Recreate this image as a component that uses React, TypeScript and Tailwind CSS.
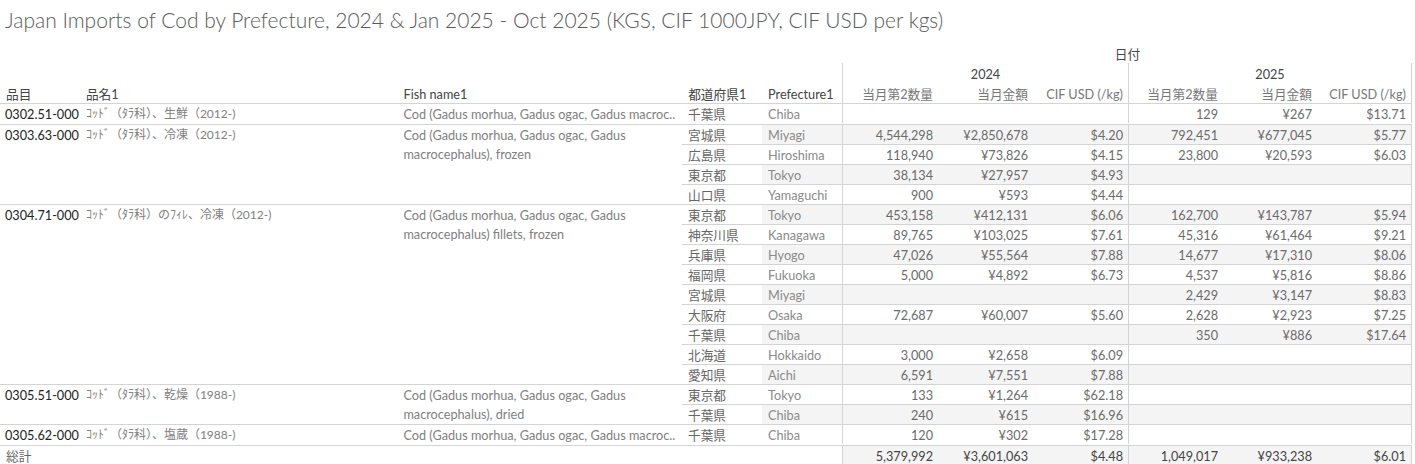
import React from "react";

type Row = { jp: string; en: string; v: string[] };
type Group = { code: string; name: string; fish: string[]; rows: Row[] };

const E = ["", "", ""];

const groups: Group[] = [
  {
    code: "0302.51-000",
    name: "ｺｯﾄﾞ（ﾀﾗ科）、生鮮（2012-)",
    fish: ["Cod (Gadus morhua, Gadus ogac, Gadus macroc.."],
    rows: [{ jp: "千葉県", en: "Chiba", v: [...E, "129", "¥267", "$13.71"] }],
  },
  {
    code: "0303.63-000",
    name: "ｺｯﾄﾞ（ﾀﾗ科）、冷凍（2012-)",
    fish: ["Cod (Gadus morhua, Gadus ogac, Gadus", "macrocephalus), frozen"],
    rows: [
      { jp: "宮城県", en: "Miyagi", v: ["4,544,298", "¥2,850,678", "$4.20", "792,451", "¥677,045", "$5.77"] },
      { jp: "広島県", en: "Hiroshima", v: ["118,940", "¥73,826", "$4.15", "23,800", "¥20,593", "$6.03"] },
      { jp: "東京都", en: "Tokyo", v: ["38,134", "¥27,957", "$4.93", ...E] },
      { jp: "山口県", en: "Yamaguchi", v: ["900", "¥593", "$4.44", ...E] },
    ],
  },
  {
    code: "0304.71-000",
    name: "ｺｯﾄﾞ（ﾀﾗ科）のﾌｨﾚ、冷凍（2012-)",
    fish: ["Cod (Gadus morhua, Gadus ogac, Gadus", "macrocephalus) fillets, frozen"],
    rows: [
      { jp: "東京都", en: "Tokyo", v: ["453,158", "¥412,131", "$6.06", "162,700", "¥143,787", "$5.94"] },
      { jp: "神奈川県", en: "Kanagawa", v: ["89,765", "¥103,025", "$7.61", "45,316", "¥61,464", "$9.21"] },
      { jp: "兵庫県", en: "Hyogo", v: ["47,026", "¥55,564", "$7.88", "14,677", "¥17,310", "$8.06"] },
      { jp: "福岡県", en: "Fukuoka", v: ["5,000", "¥4,892", "$6.73", "4,537", "¥5,816", "$8.86"] },
      { jp: "宮城県", en: "Miyagi", v: [...E, "2,429", "¥3,147", "$8.83"] },
      { jp: "大阪府", en: "Osaka", v: ["72,687", "¥60,007", "$5.60", "2,628", "¥2,923", "$7.25"] },
      { jp: "千葉県", en: "Chiba", v: [...E, "350", "¥886", "$17.64"] },
      { jp: "北海道", en: "Hokkaido", v: ["3,000", "¥2,658", "$6.09", ...E] },
      { jp: "愛知県", en: "Aichi", v: ["6,591", "¥7,551", "$7.88", ...E] },
    ],
  },
  {
    code: "0305.51-000",
    name: "ｺｯﾄﾞ（ﾀﾗ科）、乾燥（1988-)",
    fish: ["Cod (Gadus morhua, Gadus ogac, Gadus", "macrocephalus), dried"],
    rows: [
      { jp: "東京都", en: "Tokyo", v: ["133", "¥1,264", "$62.18", ...E] },
      { jp: "千葉県", en: "Chiba", v: ["240", "¥615", "$16.96", ...E] },
    ],
  },
  {
    code: "0305.62-000",
    name: "ｺｯﾄﾞ（ﾀﾗ科）、塩蔵（1988-)",
    fish: ["Cod (Gadus morhua, Gadus ogac, Gadus macroc.."],
    rows: [{ jp: "千葉県", en: "Chiba", v: ["120", "¥302", "$17.28", ...E] }],
  },
];

const measureW = ["w-[95px]", "w-[95px]", "w-[95px]", "w-[95px]", "w-[94px]", "w-[94px]"];

function Measures({ v, band, dark }: { v: string[]; band: boolean; dark?: boolean }) {
  return (
    <div className={`flex h-full border-l border-r border-[#d4d4d4] ${band ? "bg-[#f4f4f4]" : ""}`}>
      {v.map((x, i) => (
        <div
          key={i}
          className={`${measureW[i]} h-full flex items-center justify-end pr-[5px] pt-[1px] whitespace-nowrap ${
            i === 3 ? "border-l border-[#d4d4d4]" : ""
          } ${dark ? "text-[#444]" : "text-[#6b6b6b]"}`}
        >
          {x}
        </div>
      ))}
    </div>
  );
}

export default function App() {
  let idx = 0;
  return (
    <div
      className="w-[1415px] h-[464px] bg-white overflow-hidden text-[12.7px] leading-[18px]"
      style={{ fontFamily: "Lato, 'Noto Sans CJK JP', sans-serif" }}
    >
      <div className="h-[43px] pl-[5px] pt-[5px] text-[21px] leading-[30px] font-light text-[#5a5a5a] whitespace-nowrap">
        Japan Imports of Cod by Prefecture, 2024 &amp; Jan 2025 - Oct 2025 (KGS, CIF 1000JPY, CIF USD per kgs)
      </div>
      <div className="w-[1412px]">
        <div className="flex h-[20px] items-center">
          <div className="w-[843px]" />
          <div className="w-[569px] text-center text-[#444] pt-[1px]">日付</div>
        </div>
        <div className="flex h-[20px]">
          <div className="w-[843px]" />
          <div className="flex border-l border-r border-[#d4d4d4]">
            <div className="w-[285px] flex items-center justify-center text-[#444] pt-[1px]">2024</div>
            <div className="w-[283px] flex items-center justify-center text-[#444] pt-[1px] border-l border-[#d4d4d4]">
              2025
            </div>
          </div>
        </div>
        <div className="flex h-[20px] items-center text-[#444]">
          <div className="w-[80px] pl-[6px] pt-[1px]">品目</div>
          <div className="w-[318px] pl-[6px] pt-[1px]">品名1</div>
          <div className="w-[285px] pl-[6px] pt-[1px]">Fish name1</div>
          <div className="w-[80px] pl-[6px] pt-[1px]">都道府県1</div>
          <div className="w-[80px] pl-[6px] pt-[1px]">Prefecture1</div>
          <div className="flex h-full border-l border-r border-[#d4d4d4] text-[#777]">
            {["当月第2数量", "当月金額", "CIF USD (/kg)", "当月第2数量", "当月金額", "CIF USD (/kg)"].map((h, i) => (
              <div
                key={i}
                className={`${measureW[i]} h-full flex items-center justify-end pr-[5px] pt-[1px] whitespace-nowrap ${
                  i === 3 ? "border-l border-[#d4d4d4]" : ""
                }`}
              >
                {h}
              </div>
            ))}
          </div>
        </div>

        {groups.map((g, gi) => (
          <div key={gi} className="flex border-t border-[#d4d4d4]">
            <div className="w-[80px] h-[19px] flex items-center pl-[5px] pt-[1px] text-[#222] whitespace-nowrap">
              {g.code}
            </div>
            <div className="w-[318px] h-[19px] flex items-center pl-[6px] pt-[1px] text-[#808080] text-[12px] whitespace-nowrap">
              {g.name}
            </div>
            <div className="w-[285px] pl-[6px] pt-[1px] text-[#808080]">
              {g.fish.map((l, li) => (
                <div key={li} className="h-[19px] leading-[19px] whitespace-nowrap">
                  {l}
                </div>
              ))}
            </div>
            <div className="flex flex-col">
              {g.rows.map((r, ri) => {
                idx++;
                const band = idx % 2 === 0;
                return (
                  <div
                    key={ri}
                    className={`flex items-center ${ri > 0 ? "h-[20px] border-t border-[#d4d4d4]" : "h-[19px]"}`}
                  >
                    <div className="w-[80px] h-full flex items-center pl-[6px] pt-[1px] text-[#666] whitespace-nowrap">
                      {r.jp}
                    </div>
                    <div
                      className={`w-[80px] h-full flex items-center pl-[6px] pt-[1px] text-[#8a8a8a] ${
                        band ? "bg-[#f4f4f4]" : ""
                      }`}
                    >
                      {r.en}
                    </div>
                    <Measures v={r.v} band={band} />
                  </div>
                );
              })}
            </div>
          </div>
        ))}
        <div className="flex h-[21px] border-t border-b border-[#d4d4d4]">
          <div className="w-[843px] h-full flex items-center pl-[6px] pt-[1px] text-[#666]">総計</div>
          <Measures v={["5,379,992", "¥3,601,063", "$4.48", "1,049,017", "¥933,238", "$6.01"]} band dark />
        </div>
      </div>
    </div>
  );
}
